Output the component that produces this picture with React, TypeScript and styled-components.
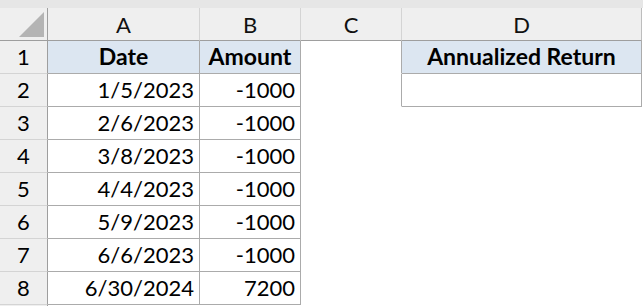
import React from "react";
import styled, { createGlobalStyle } from "styled-components";

const GlobalStyle = createGlobalStyle`
  html, body {
    margin: 0;
    padding: 0;
    background: #ffffff;
  }
  body {
    font-family: Lato, "Liberation Sans", sans-serif;
  }
`;

const Page = styled.div`
  width: 643px;
  height: 306px;
  overflow: hidden;
  background: #ffffff;
`;

const TopStrip = styled.div`
  height: 8px;
  background: #e6e6e6;
`;

const Grid = styled.div`
  display: grid;
  grid-template-columns: 48px 152px 101px 101px 240px 1px;
  grid-auto-rows: 33px;
`;

const Corner = styled.div`
  background: #efefef;
  border-right: 1px solid #9e9e9e;
  border-bottom: 1px solid #9e9e9e;
  position: relative;
`;

const Triangle = styled.div`
  position: absolute;
  left: 19px;
  top: 4px;
  width: 25px;
  height: 25px;
  background: #b4b4b4;
  clip-path: polygon(100% 0, 100% 100%, 0 100%);
`;

const ColHead = styled.div<{ $last?: boolean }>`
  background: #efefef;
  border-right: 1px solid ${(p) => (p.$last ? "#bdbdbd" : "#d4d4d4")};
  border-bottom: 1px solid #9e9e9e;
  display: flex;
  align-items: center;
  justify-content: center;
  font-size: 22px;
  color: #111;
  padding-top: 1px;
`;

const RowHead = styled.div`
  background: #efefef;
  border-right: 1px solid #9e9e9e;
  border-bottom: 1px solid #d4d4d4;
  display: flex;
  align-items: flex-end;
  justify-content: center;
  font-size: 22px;
  color: #000;
  padding-bottom: 3px;
`;

const Cell = styled.div<{
  $align?: "left" | "right" | "center";
  $bold?: boolean;
  $fill?: boolean;
  $right?: boolean;
  $bottom?: boolean;
}>`
  background: ${(p) => (p.$fill ? "#dce6f1" : "#ffffff")};
  border-right: 1px solid ${(p) => (p.$right ? "#ababab" : "transparent")};
  border-bottom: 1px solid ${(p) => (p.$bottom ? "#ababab" : "transparent")};
  display: flex;
  align-items: flex-end;
  justify-content: ${(p) =>
    p.$align === "right" ? "flex-end" : p.$align === "center" ? "center" : "flex-start"};
  padding: 0 5px 3px;
  font-size: ${(p) => (p.$bold ? "23px" : "22px")};
  font-weight: ${(p) => (p.$bold ? 700 : 400)};
  color: #000;
  white-space: nowrap;
  overflow: hidden;
`;

const Spacer = styled.div``;

const rows: [string, string][] = [
  ["1/5/2023", "-1000"],
  ["2/6/2023", "-1000"],
  ["3/8/2023", "-1000"],
  ["4/4/2023", "-1000"],
  ["5/9/2023", "-1000"],
  ["6/6/2023", "-1000"],
  ["6/30/2024", "7200"],
];

export default function App() {
  return (
    <Page>
      <GlobalStyle />
      <TopStrip />
      <Grid>
        <Corner>
          <Triangle />
        </Corner>
        <ColHead>A</ColHead>
        <ColHead>B</ColHead>
        <ColHead>C</ColHead>
        <ColHead $last>D</ColHead>
        <Spacer />

        <RowHead>1</RowHead>
        <Cell $align="center" $bold $fill $right $bottom>
          Date
        </Cell>
        <Cell $align="center" $bold $fill $right $bottom>
          Amount
        </Cell>
        <Cell $right />
        <Cell $align="center" $bold $fill $right $bottom>
          Annualized Return
        </Cell>
        <Spacer />

        {rows.map(([date, amount], i) => (
          <React.Fragment key={date}>
            <RowHead>{i + 2}</RowHead>
            <Cell $align="right" $right $bottom>
              {date}
            </Cell>
            <Cell $align="right" $right $bottom>
              {amount}
            </Cell>
            <Cell $right={i === 0} />
            <Cell $right={i === 0} $bottom={i === 0} />
            <Spacer />
          </React.Fragment>
        ))}
        <RowHead />
      </Grid>
    </Page>
  );
}
